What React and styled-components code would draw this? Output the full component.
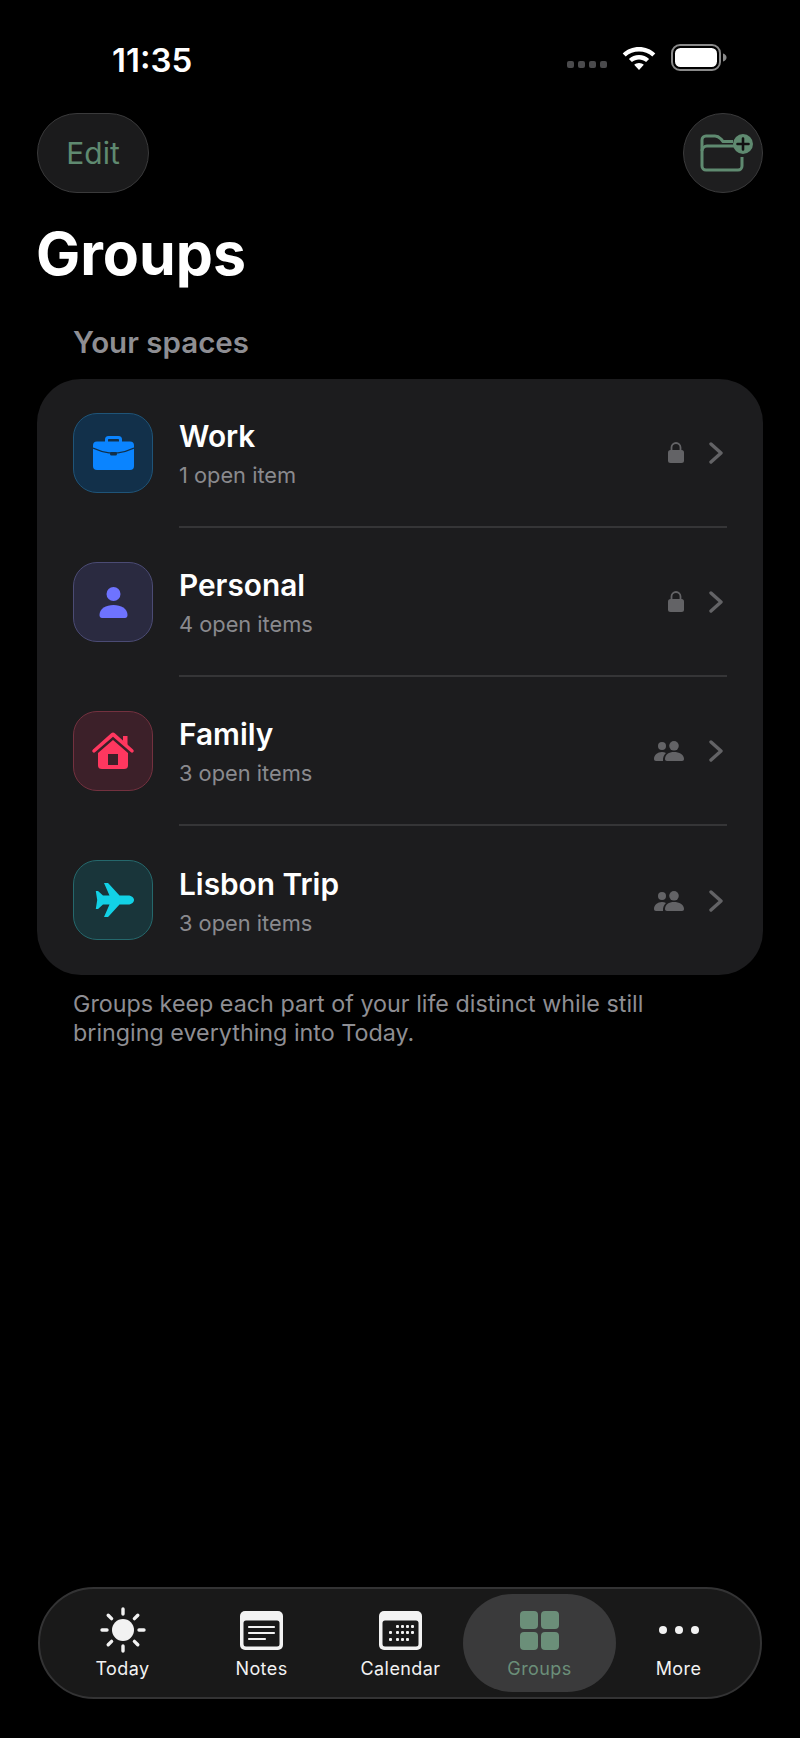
import React from 'react'
import styled, { createGlobalStyle } from 'styled-components'

const GlobalStyle = createGlobalStyle`
  html, body {
    margin: 0;
    background: #000;
  }
  * {
    box-sizing: border-box;
  }
`

const Page = styled.div`
  width: 800px;
  height: 1738px;
  padding: 0 37px 39px;
  display: flex;
  flex-direction: column;
  background: #000;
  font-family: Inter, "Noto Sans", sans-serif;
  overflow: hidden;
`

const StatusBar = styled.div`
  height: 113px;
  padding: 42px 0 0 75px;
  display: flex;
  justify-content: space-between;
  align-items: flex-start;
`

const Time = styled.div`
  color: #fff;
  font-size: 33px;
  line-height: 36px;
  font-weight: 600;
`

const StatusIcons = styled.div`
  display: flex;
  align-items: center;
  margin: 2px 36px 0 0;
  gap: 14px;
`

const SignalDots = styled.div`
  display: flex;
  gap: 4px;
  margin: 14px 0 0;
`

const SignalDot = styled.span`
  width: 7px;
  height: 7px;
  border-radius: 2px;
  background: #4a4a4c;
`

const Header = styled.div`
  display: flex;
  justify-content: space-between;
`

const EditButton = styled.div`
  width: 112px;
  height: 80px;
  border-radius: 40px;
  background: #1b1b1c;
  border: 1px solid #3a3a3b;
  color: #5f8a70;
  font-size: 30px;
  display: flex;
  align-items: center;
  justify-content: center;
`

const RoundButton = styled.div`
  width: 80px;
  height: 80px;
  padding-left: 6px;
  border-radius: 50%;
  background: #1e1e1f;
  border: 1px solid #3a3a3b;
  display: flex;
  align-items: center;
  justify-content: center;
`

const Title = styled.h1`
  margin: 25px 0 0 -1px;
  color: #fff;
  font-size: 59px;
  line-height: 72px;
  font-weight: 700;
`

const SectionLabel = styled.div`
  margin: 34px 0 0 36px;
  color: #8e8e93;
  font-size: 29.500px;
  line-height: 36px;
  font-weight: 600;
`

const Card = styled.div`
  margin-top: 19px;
  border-radius: 44px;
  background: #1c1c1e;
  padding: 0 36px;
`

const Row = styled.div`
  height: 149px;
  display: flex;
  align-items: center;
  gap: 26px;
`

const IconTile = styled.div`
  width: 80px;
  height: 80px;
  flex: none;
  margin-top: -1px;
  border-radius: 24px;
  background: ${({ $bg }) => $bg};
  border: 1px solid ${({ $line }) => $line};
  display: flex;
  align-items: center;
  justify-content: center;
`

const RowBody = styled.div`
  flex: 1;
  height: 100%;
  display: flex;
  align-items: center;
  border-bottom: ${({ $last }) => ($last ? 'none' : '2px solid #353537')};
`

const RowText = styled.div`
  flex: 1;
`

const RowTitle = styled.div`
  color: #fff;
  font-size: 29.800px;
  line-height: 38px;
  font-weight: 600;
`

const RowSub = styled.div`
  margin-top: 6px;
  color: #8a8a8e;
  font-size: 21.800px;
  line-height: 28px;
`

const RowMeta = styled.div`
  display: flex;
  align-items: center;
  gap: 25px;
  margin-right: 4px;
`

const Footnote = styled.p`
  margin: 14px 36px 0;
  color: #8e8e93;
  font-size: 23.300px;
  line-height: 29px;
`

const TabBar = styled.div`
  margin-top: auto;
  margin-left: 1px;
  height: 112px;
  width: 724px;
  border-radius: 56px;
  background: #191919;
  border: 2px solid #333334;
  padding: 5px 13px;
  display: grid;
  grid-template-columns: repeat(5, 139px);
`

const Tab = styled.div`
  position: relative;
  justify-self: center;
  width: 153px;
  height: 98px;
  padding-top: 8px;
  border-radius: 49px;
  background: ${({ $active }) => ($active ? '#3a3a3b' : 'transparent')};
  color: ${({ $active }) => ($active ? '#6b8f79' : '#f2f2f2')};
  display: flex;
  flex-direction: column;
  align-items: center;
`

const TabIcon = styled.div`
  height: 56px;
  display: flex;
  align-items: center;
  justify-content: center;
`

const TabLabel = styled.div`
  font-size: 18px;
  line-height: 22px;
  font-weight: 400;
  letter-spacing: 0.400px;
`

const Wifi = () => (
  <svg width="36" height="27" viewBox="0 0 36 27">
    <path d="M18 3c6.300 0 12 2.400 16.300 6.400l-3 3.200C27.700 9.200 23.100 7.500 18 7.500S8.300 9.200 4.700 12.600l-3-3.200C6 5.400 11.700 3 18 3Z" fill="#fff" />
    <path d="M18 11c3.900 0 7.400 1.500 10.100 3.900l-3 3.200C23.200 16.500 20.700 15.500 18 15.500s-5.200 1-7.100 2.600l-3-3.200C10.600 12.500 14.100 11 18 11Z" fill="#fff" />
    <path d="M18 19c1.900 0 3.500.7 4.800 1.800L18 26l-4.800-5.200C14.500 19.700 16.100 19 18 19Z" fill="#fff" />
  </svg>
)

const Battery = () => (
  <svg width="56" height="27" viewBox="0 0 56 27">
    <rect x="1" y="1" width="48" height="25" rx="8" fill="none" stroke="#8a8a8a" strokeWidth="2" />
    <rect x="4" y="4" width="42" height="19" rx="5.500" fill="#fff" />
    <path d="M52 9.500c2 .5 3.500 2 3.500 4s-1.500 3.500-3.500 4Z" fill="#8a8a8a" />
  </svg>
)

const FolderPlus = () => (
  <svg width="54" height="40" viewBox="0 0 54 40" fill="none">
    <path d="M37 13H8a5 5 0 0 0-5 5" stroke="#5f8a70" strokeWidth="2.800" />
    <path d="M43 24v9a4 4 0 0 1-4 4H7a4 4 0 0 1-4-4V7a4 4 0 0 1 4-4h9c3 0 4 1 6 3l2 2.500h10" stroke="#5f8a70" strokeWidth="3" strokeLinejoin="round" />
    <circle cx="44" cy="11" r="10" fill="#5f8a70" />
    <path d="M44 5.500v11M38.500 11h11" stroke="#111" strokeWidth="2.600" strokeLinecap="round" />
  </svg>
)

const Briefcase = () => (
  <svg width="41" height="34" viewBox="0 0 41 34">
    <path d="M12 7V3.500A3.500 3.500 0 0 1 15.500 0h10A3.500 3.500 0 0 1 29 3.500V7h-3V4c0-.6-.4-1-1-1h-9c-.6 0-1 .4-1 1v3Z" fill="#0a84ff" />
    <rect x="0" y="5.500" width="41" height="28.500" rx="4" fill="#0a84ff" />
    <path d="M0 12c6 2.800 11.500 4.300 16 4.800h9c4.500-.5 10-2 16-4.800" fill="none" stroke="#12304a" strokeWidth="1.300" />
    <rect x="17" y="16" width="7" height="3.500" rx="1.500" fill="#12304a" />
  </svg>
)

const Person = ({ color = '#6e73ff' }) => (
  <svg width="29" height="31" viewBox="0 0 29 31">
    <circle cx="14.500" cy="7" r="7" fill={color} />
    <path d="M0.500 28c0-6.500 6.500-10 14-10s14 3.500 14 10c0 2-1 3-2.500 3H3c-1.500 0-2.500-1-2.500-3Z" fill={color} />
  </svg>
)

const House = () => (
  <svg width="42" height="38" viewBox="0 0 42 38">
    <path d="M31 4h4.500v10L31 9Z" fill="#ff375f" />
    <path d="M21 0.500c.7 0 1.300.3 1.800.8L41 17.500c.9.8 1 1.900.3 2.600-.7.800-1.800.7-2.600 0L21 4.800 3.300 20.100c-.8.700-1.900.8-2.600 0-.7-.7-.6-1.800.3-2.600L19.200 1.300c.5-.5 1.100-.8 1.800-.8Z" fill="#ff375f" />
    <path fillRule="evenodd" d="M21 8l15 13v12.500c0 2.400-1.400 3.500-4 3.500H10c-2.600 0-4-1.100-4-3.500V21ZM16 22v11h10V22Z" fill="#ff375f" />
  </svg>
)

const Plane = () => (
  <svg width="39" height="34" viewBox="0 0 39 34" style={{ marginLeft: 2 }}>
    <path d="M9 0h3c1 0 1.500.3 2 1L24.500 12.500H33c4 0 6 2.500 6 4.500s-2 4.500-6 4.500H24.500L14 33c-.5.700-1 1-2 1H9l5.500-12.500H8L3 26H.8l1.400-9L.8 8H3l5 4.500h6.500Z" fill="#12d2e6" />
  </svg>
)

const Lock = () => (
  <svg width="16" height="21" viewBox="0 0 16 21">
    <path d="M3.500 9V5.500a4.500 4.500 0 0 1 9 0V9" fill="none" stroke="#636366" strokeWidth="1.800" />
    <rect x="0" y="8" width="16" height="13" rx="2.500" fill="#636366" />
  </svg>
)

const People = () => (
  <svg width="30" height="20" viewBox="0 0 30 20">
    <circle cx="8" cy="5" r="4" fill="#636366" />
    <path d="M0 18c0-4 3.500-7 8-7 1.500 0 2.800.3 4 .9C10 13.500 8.800 16 9 20H2c-1.300 0-2-.8-2-2Z" fill="#636366" />
    <circle cx="20" cy="4.800" r="4.800" fill="#636366" />
    <path d="M11 18c0-4.500 4-7 9-7s10 2.500 10 7c0 1.300-.7 2-2 2H13c-1.300 0-2-.7-2-2Z" fill="#636366" />
  </svg>
)

const Chevron = () => (
  <svg width="14" height="22" viewBox="0 0 14 22">
    <path d="M2 2l10 9-10 9" fill="none" stroke="#636366" strokeWidth="3.400" strokeLinecap="round" strokeLinejoin="round" />
  </svg>
)

const Sun = () => (
  <svg width="46" height="46" viewBox="0 0 46 46">
    <circle cx="23" cy="23" r="11" fill="#f2f2f2" />
    <g stroke="#f2f2f2" strokeWidth="3.400" strokeLinecap="round">
      <path d="M23 2v5M23 39v5M2 23h5M39 23h5M8.200 8.200l3.400 3.400M34.400 34.400l3.400 3.400M8.200 37.800l3.400-3.400M34.400 11.600l3.400-3.400" />
    </g>
  </svg>
)

const Notes = () => (
  <svg width="43" height="39" viewBox="0 0 43 39">
    <rect x="0" y="0" width="43" height="39" rx="5" fill="#f2f2f2" />
    <rect x="3.500" y="9.500" width="36" height="26" rx="2.500" fill="#191919" />
    <path d="M9 16h25M9 22h25M9 28h16" stroke="#f2f2f2" strokeWidth="2.200" strokeLinecap="round" />
  </svg>
)

const Calendar = () => (
  <svg width="43" height="39" viewBox="0 0 43 39">
    <rect x="0" y="0" width="43" height="39" rx="5" fill="#f2f2f2" />
    <rect x="3.500" y="9.500" width="36" height="26" rx="2.500" fill="#191919" />
    <g fill="#f2f2f2">
      {[[17, 14], [22, 14], [27, 14], [32, 14], [10, 20], [17, 20], [22, 20], [27, 20], [32, 20], [10, 27], [17, 27], [22, 27], [27, 27]].map(([x, y]) => (
        <rect key={`${x}-${y}`} x={x} y={y} width="3" height="3" rx="1" />
      ))}
    </g>
  </svg>
)

const GridIcon = () => (
  <svg width="39" height="39" viewBox="0 0 39 39">
    <g fill="#6b8f79">
      <rect x="0" y="0" width="18" height="18" rx="4" />
      <rect x="21" y="0" width="18" height="18" rx="4" />
      <rect x="0" y="21" width="18" height="18" rx="4" />
      <rect x="21" y="21" width="18" height="18" rx="4" />
    </g>
  </svg>
)

const Dots = () => (
  <svg width="40" height="8" viewBox="0 0 40 8">
    <circle cx="4" cy="4" r="4" fill="#f2f2f2" />
    <circle cx="20" cy="4" r="4" fill="#f2f2f2" />
    <circle cx="36" cy="4" r="4" fill="#f2f2f2" />
  </svg>
)

const groups = [
  { name: 'Work', sub: '1 open item', bg: '#12304a', line: '#1f5478', icon: <Briefcase />, meta: <Lock /> },
  { name: 'Personal', sub: '4 open items', bg: '#2a2a40', line: '#4b4b74', icon: <Person />, meta: <Lock /> },
  { name: 'Family', sub: '3 open items', bg: '#3c2029', line: '#73313f', icon: <House />, meta: <People /> },
  { name: 'Lisbon Trip', sub: '3 open items', bg: '#19353a', line: '#25686c', icon: <Plane />, meta: <People /> }
]

const tabs = [
  { label: 'Today', icon: <Sun /> },
  { label: 'Notes', icon: <Notes /> },
  { label: 'Calendar', icon: <Calendar /> },
  { label: 'Groups', icon: <GridIcon />, active: true },
  { label: 'More', icon: <Dots /> }
]

const App = () => (
  <Page>
    <GlobalStyle />
    <StatusBar>
      <Time>11:35</Time>
      <StatusIcons>
        <SignalDots>
          <SignalDot />
          <SignalDot />
          <SignalDot />
          <SignalDot />
        </SignalDots>
        <Wifi />
        <Battery />
      </StatusIcons>
    </StatusBar>
    <Header>
      <EditButton>Edit</EditButton>
      <RoundButton>
        <FolderPlus />
      </RoundButton>
    </Header>
    <Title>Groups</Title>
    <SectionLabel>Your spaces</SectionLabel>
    <Card>
      {groups.map((g, i) => (
        <Row key={g.name}>
          <IconTile $bg={g.bg} $line={g.line}>
            {g.icon}
          </IconTile>
          <RowBody $last={i === groups.length - 1}>
            <RowText>
              <RowTitle>{g.name}</RowTitle>
              <RowSub>{g.sub}</RowSub>
            </RowText>
            <RowMeta>
              {g.meta}
              <Chevron />
            </RowMeta>
          </RowBody>
        </Row>
      ))}
    </Card>
    <Footnote>
      Groups keep each part of your life distinct while still
      <br />
      bringing everything into Today.
    </Footnote>
    <TabBar>
      {tabs.map(t => (
        <Tab key={t.label} $active={t.active}>
          <TabIcon>{t.icon}</TabIcon>
          <TabLabel>{t.label}</TabLabel>
        </Tab>
      ))}
    </TabBar>
  </Page>
)

export default App
